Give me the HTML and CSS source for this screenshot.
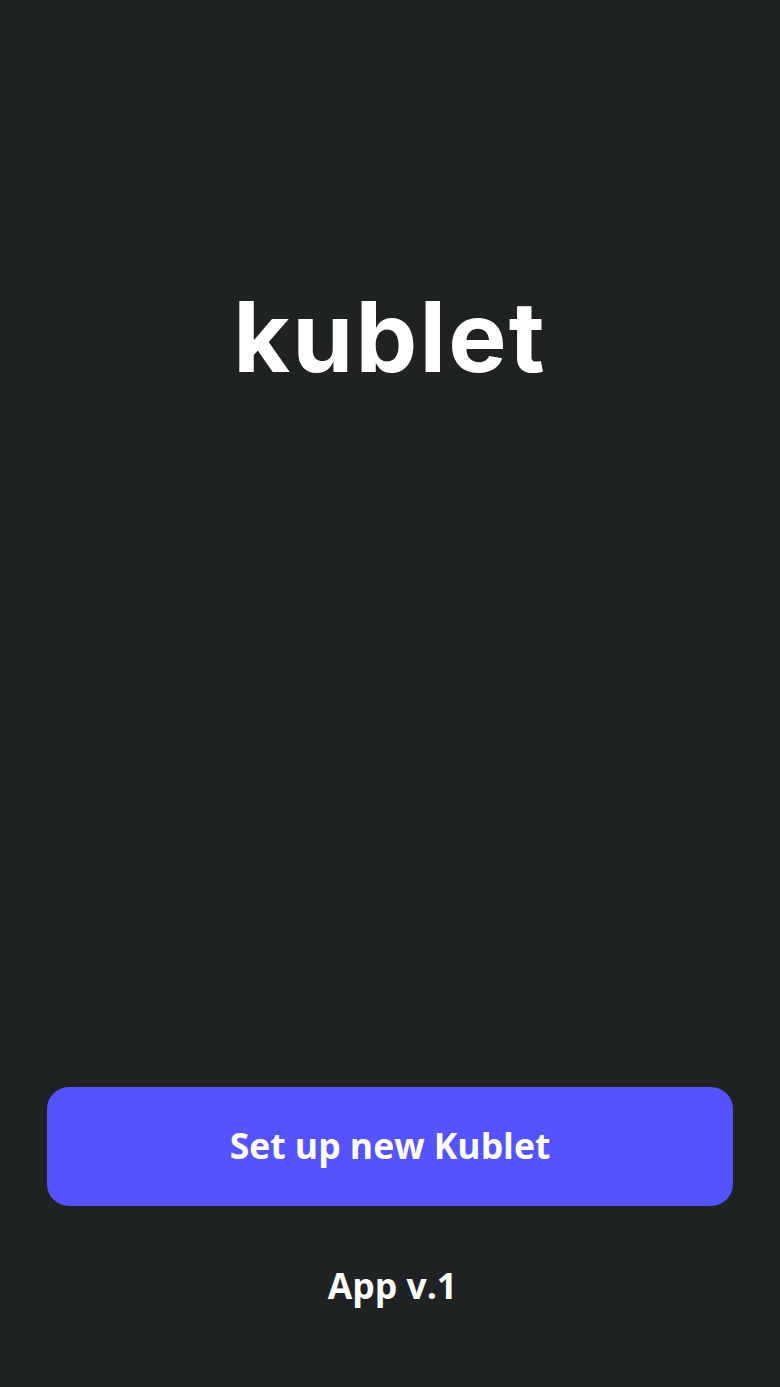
FILE: index.html
```html
<!DOCTYPE html>
<html lang="en">
<head>
<meta charset="utf-8">
<title>Kublet</title>
<link rel="stylesheet" href="styles.css">
</head>
<body>
<main class="screen">
  <h1 class="logo">kublet</h1>
  <div class="actions">
    <button class="primary" type="button">Set up new Kublet</button>
    <p class="version">App v.1</p>
  </div>
</main>
</body>
</html>
```
FILE: styles.css
```css
* { box-sizing: border-box; }
html, body { margin: 0; height: 100%; }
body { background: #1f2223; color: #fff; font-family: "Open Sans", sans-serif; }
.screen { height: 1387px; display: flex; flex-direction: column; align-items: center; padding: 0 47px; overflow: hidden; }
.logo { margin: 279px 0 0; font-family: Inter, sans-serif; font-weight: 650; font-size: 98px; line-height: 116px; letter-spacing: 2.2px; color: #fff; }
.actions { margin-top: auto; width: 100%; display: flex; flex-direction: column; align-items: center; padding-bottom: 78px; }
.primary { width: 100%; height: 119px; padding: 0 0 3px; border: 0; border-radius: 22px; background: #5453ff; color: #fff; font-family: "Open Sans", sans-serif; font-weight: 700; font-size: 35.5px; }
.version { margin: 55px 0 0 5px; font-weight: 700; font-size: 35.5px; line-height: 48px; }
```
